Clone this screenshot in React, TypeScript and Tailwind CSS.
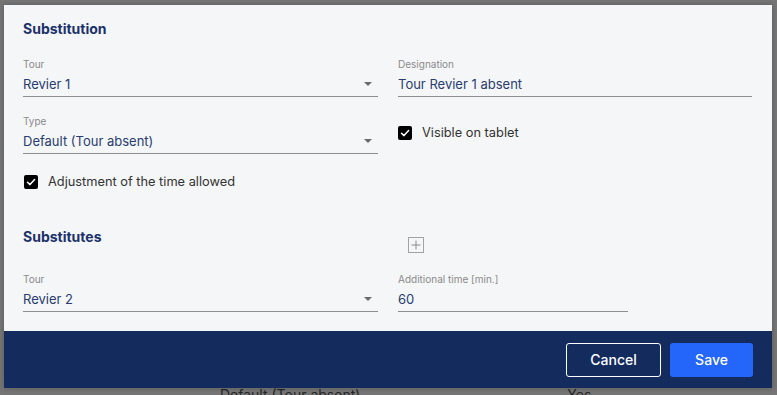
import React from "react";

const Arrow = () => (
  <svg width="8" height="4" viewBox="0 0 8 4" className="mr-[6px] shrink-0">
    <path d="M0 0 L8 0 L4 4 Z" fill="#6b6b6b" />
  </svg>
);

const Field = ({ label, value, select, width }: { label: string; value: string; select?: boolean; width?: string }) => (
  <div className={`flex flex-col ${width ?? "w-full"}`}>
    <div className="h-[14px] text-[10px] leading-[14px] text-[#8a8a8a]">{label}</div>
    <div className="mt-[4px] flex items-center justify-between border-b border-[#8e8e8e] pb-[3px]">
      <span className="text-[13px] leading-[18px] text-[#283c6f]">{value}</span>
      {select && <Arrow />}
    </div>
  </div>
);

const Check = ({ label }: { label: string }) => (
  <div className="flex items-center h-[14px]">
    <div className="w-[14px] h-[14px] rounded-[2px] bg-black flex items-center justify-center ml-[1px]">
      <svg width="10" height="10" viewBox="0 0 10 10">
        <path d="M1.5 5.2 L4 7.6 L8.6 2.6" stroke="white" strokeWidth="1.5" fill="none" strokeLinecap="round" strokeLinejoin="round" />
      </svg>
    </div>
    <span className="ml-[10px] text-[12.8px] leading-[18px] text-[#333333]">{label}</span>
  </div>
);

export default function App() {
  return (
    <div className="relative w-[777px] h-[395px] overflow-hidden bg-[#767676]" style={{ fontFamily: "Inter, 'Noto Sans', sans-serif" }}>
      <div className="pt-[386px] flex text-[14px] leading-[18px] text-[#262626]">
        <span className="ml-[220px]">Default (Tour absent)</span>
        <span className="ml-[207px]">Yes</span>
      </div>
      <div className="absolute left-[4px] top-[5px] w-[768px] h-[383px] flex flex-col bg-[#f5f6f8] shadow-[0_0_6px_rgba(0,0,0,0.25)]">
        <div className="flex-1 px-[19px] pt-[14px]">
          <h2 className="text-[14px] leading-[20px] font-bold text-[#1b3169]">Substitution</h2>
          <div className="mt-[18px] grid grid-cols-[355px_354px] gap-x-[20px]">
            <Field label="Tour" value="Revier 1" select />
            <Field label="Designation" value="Tour Revier 1 absent" />
          </div>
          <div className="mt-[17px] grid grid-cols-[355px_354px] gap-x-[20px]">
            <Field label="Type" value="Default (Tour absent)" select />
            <div className="mt-[12px] -ml-[1px]">
              <Check label="Visible on tablet" />
            </div>
          </div>
          <div className="mt-[21px]">
            <Check label="Adjustment of the time allowed" />
          </div>
          <div className="mt-[38px] grid grid-cols-[355px_354px] gap-x-[20px]">
            <h2 className="text-[14px] leading-[20px] font-bold text-[#1b3169]">Substitutes</h2>
            <div className="pt-[10px] pl-[10px]">
              <div className="w-[16px] h-[16px] border border-[#a3a3a3] flex items-center justify-center">
                <svg width="10" height="10" viewBox="0 0 10 10">
                  <path d="M5 0.5 V9.5 M0.5 5 H9.5" stroke="#8a8a8a" strokeWidth="1" />
                </svg>
              </div>
            </div>
          </div>
          <div className="mt-[19px] grid grid-cols-[355px_354px] gap-x-[20px]">
            <Field label="Tour" value="Revier 2" select />
            <Field label="Additional time [min.]" value="60" width="w-[230px]" />
          </div>
        </div>
        <div className="h-[57px] bg-[#142b5e] flex items-center justify-end gap-[9px] pr-[19px]">
          <button className="w-[95px] h-[34px] border border-white rounded-[3px] text-white text-[14px] font-medium">Cancel</button>
          <button className="w-[83px] h-[34px] bg-[#2466fa] rounded-[3px] text-white text-[14px] font-medium">Save</button>
        </div>
      </div>
    </div>
  );
}
